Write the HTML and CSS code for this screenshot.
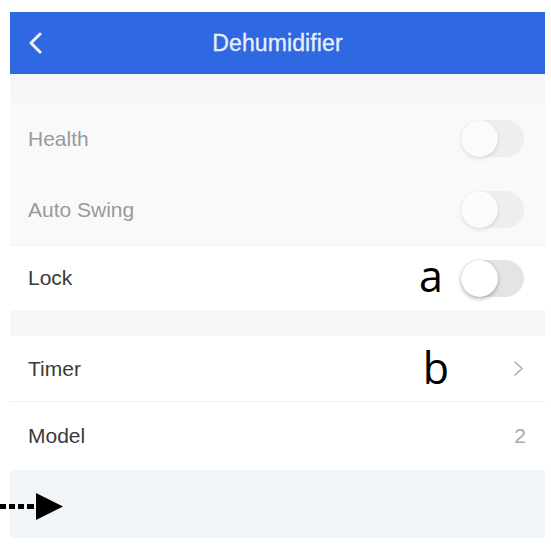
FILE: index.html
```html
<!DOCTYPE html>
<html lang="en">
<head>
<meta charset="utf-8">
<title>Dehumidifier</title>
<link rel="stylesheet" href="styles.css">
</head>
<body>
<div class="screen">
  <header class="nav">
    <span class="back">
      <svg width="16" height="22" viewBox="0 0 16 22"><polyline points="12,2 3,11 12,20" fill="none" stroke="#eef2fd" stroke-width="3" stroke-linecap="round" stroke-linejoin="round"/></svg>
    </span>
    <h1 class="title">Dehumidifier</h1>
    <span class="nav-side"></span>
  </header>

  <div class="gap gap-top"></div>

  <section class="group group-disabled">
    <div class="row row-tall">
      <span class="label">Health</span>
      <span class="switch"><span class="knob"></span></span>
    </div>
    <div class="row row-tall">
      <span class="label">Auto Swing</span>
      <span class="switch"><span class="knob"></span></span>
    </div>
  </section>

  <section class="group">
    <div class="row row-lock">
      <span class="label">Lock</span>
      <span class="trail">
        <span class="mark mark-a">a</span>
        <span class="switch"><span class="knob"></span></span>
      </span>
    </div>
  </section>

  <div class="gap gap-mid"></div>

  <section class="group">
    <div class="row row-timer sep">
      <span class="label">Timer</span>
      <span class="trail">
        <span class="mark mark-b">b</span>
        <svg class="chev" width="11" height="17" viewBox="0 0 11 17"><polyline points="2,2 9,8.5 2,15" fill="none" stroke="#adadad" stroke-width="1.6" stroke-linecap="round" stroke-linejoin="round"/></svg>
      </span>
    </div>
    <div class="row row-model">
      <span class="label">Model</span>
      <span class="value">2</span>
    </div>
  </section>

  <div class="bottom-area"></div>

  <svg class="pointer" width="66" height="30" viewBox="0 0 66 30">
    <rect x="0" y="13" width="6" height="5" fill="#000"/>
    <rect x="9" y="13" width="6" height="5" fill="#000"/>
    <rect x="18" y="13" width="6" height="5" fill="#000"/>
    <rect x="27" y="13" width="7" height="5" fill="#000"/>
    <polygon points="36,2 63,15.5 36,29" fill="#000"/>
  </svg>
</div>
</body>
</html>
```

FILE: styles.css
```css
* { box-sizing: border-box; }

html, body {
  margin: 0;
  padding: 0;
  background: #ffffff;
}

body {
  font-family: "Liberation Sans", Arial, sans-serif;
  width: 551px;
  height: 548px;
  overflow: hidden;
}

.screen {
  position: relative;
  margin: 12px 0 0 10px;
  width: 535px;
  display: flex;
  flex-direction: column;
}

.nav {
  height: 62px;
  background: #2f69e2;
  display: flex;
  align-items: center;
  padding: 0 16px;
}

.back {
  width: 40px;
  display: flex;
  align-items: center;
  padding-left: 2px;
}

.nav-side { width: 40px; }

.title {
  flex: 1;
  margin: 0;
  text-align: center;
  color: #e9effc;
  font-size: 23px;
  font-weight: normal;
  letter-spacing: 0.1px;
  -webkit-text-stroke: 0.3px #e9effc;
}

.gap { background: #f5f6f7; }
.gap-top { height: 29px; }
.gap-mid { height: 26px; }

.group { background: #ffffff; }
.group-disabled { background: #f9f9fa; }

.row {
  display: flex;
  align-items: center;
  justify-content: space-between;
  padding: 0 21px 0 18px;
}

.row-tall { height: 71px; }
.row-lock { height: 65px; border-top: 1px solid #f1f1f1; }
.row-timer { height: 66px; padding-right: 20px; }
.row-model { height: 68px; padding-right: 19px; }
.sep { border-bottom: 1px solid #f0f0f0; }

.label {
  font-size: 21px;
  color: #3a3a3a;
}

.group-disabled .label { color: #9a9a9a; }

.trail {
  display: flex;
  align-items: center;
}

.mark {
  font-family: "Open Sans", "Liberation Sans", sans-serif;
  font-size: 43px;
  line-height: 1;
  color: #000;
}

.mark-a { margin-right: 18px; margin-top: -6px; }
.mark-b { margin-right: 64px; margin-top: -2px; }

.chev { display: block; margin-right: 1px; }

.value {
  font-size: 21px;
  color: #a9a9a9;
}

.switch {
  position: relative;
  width: 63px;
  height: 37px;
  border-radius: 19px;
  background: #e4e4e4;
  display: block;
}

.knob {
  position: absolute;
  left: 0;
  top: 0;
  width: 37px;
  height: 37px;
  border-radius: 50%;
  background: #ffffff;
  box-shadow: 0 2px 4px rgba(0, 0, 0, 0.28), 0 0 1px rgba(0, 0, 0, 0.2);
}

.group-disabled .switch { background: #eeeeee; }
.group-disabled .knob {
  background: #fbfbfb;
  box-shadow: 0 2px 4px rgba(0, 0, 0, 0.1), 0 0 1px rgba(0, 0, 0, 0.08);
}

.bottom-area {
  height: 68px;
  background: #f3f6f9;
}

.pointer {
  position: absolute;
  left: -10px;
  top: 479px;
}
```
